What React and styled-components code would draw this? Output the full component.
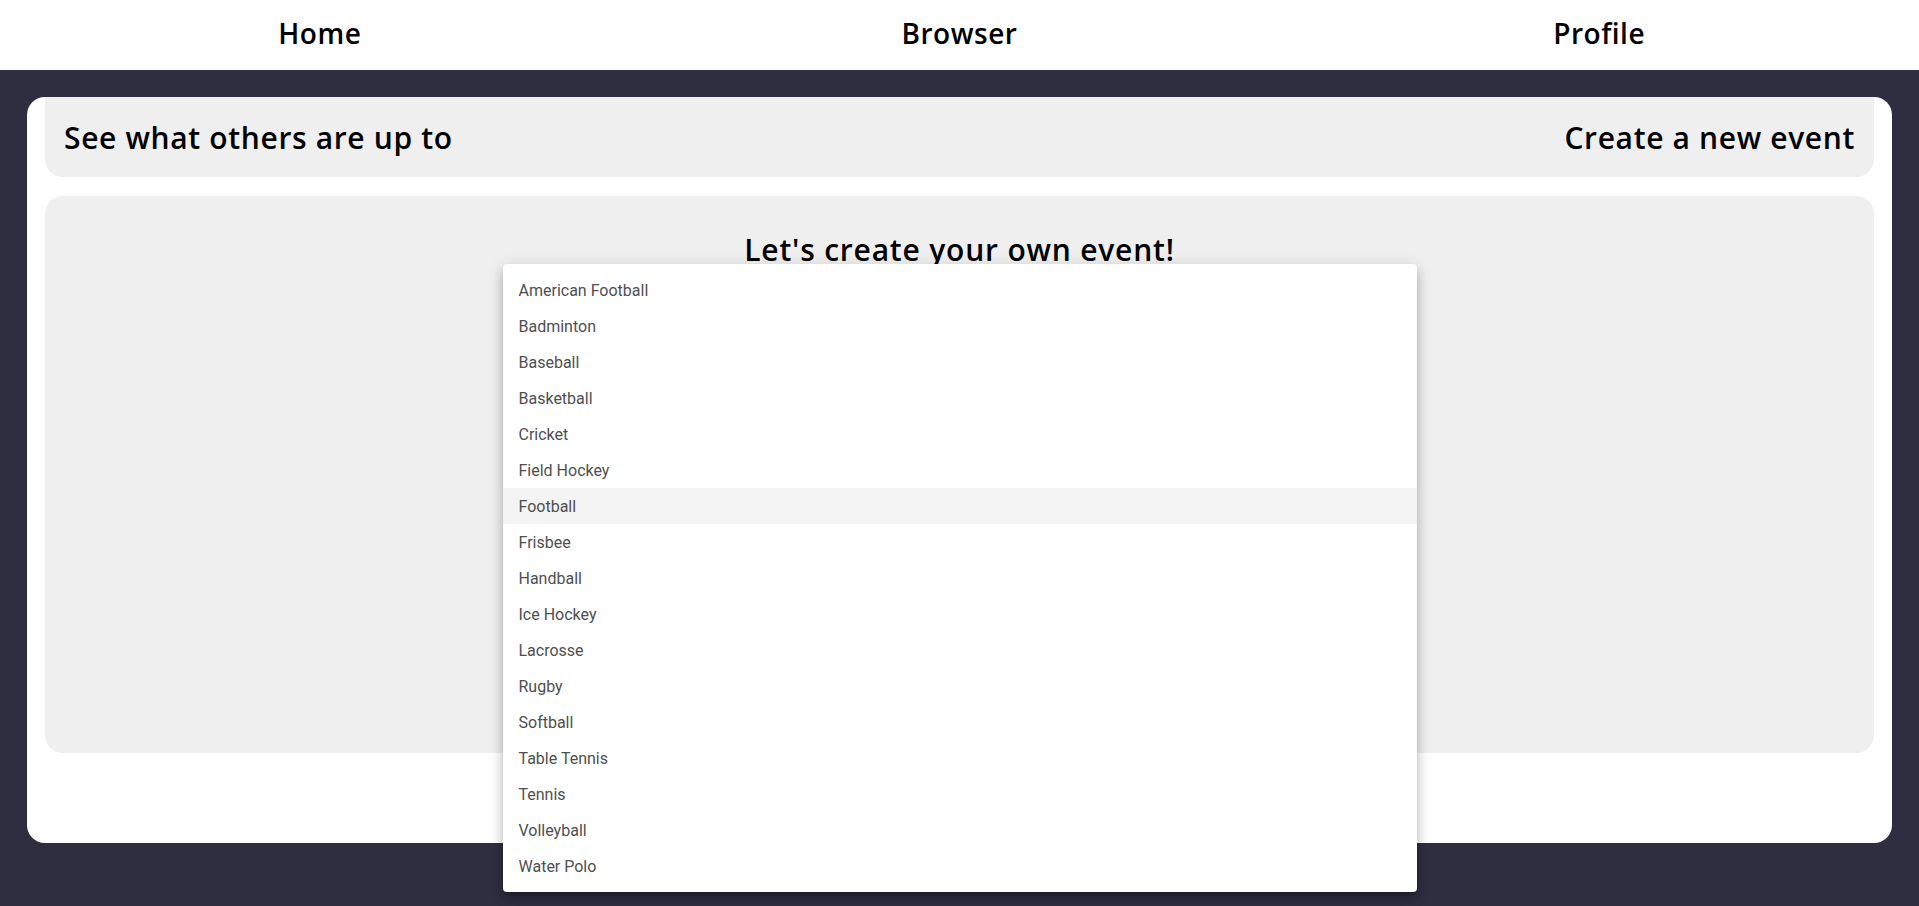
import React from 'react';
import styled, { createGlobalStyle } from 'styled-components';

const GlobalStyle = createGlobalStyle`
    html, body {
        margin: 0;
        padding: 0;
        background: #2f2e41;
        height: 100%;
        overflow: hidden;
    }
    * { box-sizing: border-box; }
`;

const sports = [
    'American Football', 'Badminton', 'Baseball', 'Basketball', 'Cricket',
    'Field Hockey', 'Football', 'Frisbee', 'Handball', 'Ice Hockey',
    'Lacrosse', 'Rugby', 'Softball', 'Table Tennis', 'Tennis',
    'Volleyball', 'Water Polo',
];

const headingFont = `"Open Sans", "Noto Sans", sans-serif`;

const NavBar = styled.nav`
    display: grid;
    grid-template-columns: repeat(3, 1fr);
    height: 70px;
    padding-bottom: 5px;
    background: #ffffff;
    align-items: center;
`;

const NavLink = styled.a`
    justify-self: center;
    font-family: ${headingFont};
    font-weight: 600;
    font-size: 28px;
    letter-spacing: 0.5px;
    color: #000;
    text-decoration: none;
    cursor: pointer;
`;

const Page = styled.main`
    padding: 27px;
`;

const Card = styled.section`
    background: #ffffff;
    border-radius: 18px;
    padding: 0 18px 90px;
    display: flex;
    flex-direction: column;
    gap: 19px;
`;

const TopBar = styled.div`
    display: flex;
    justify-content: space-between;
    align-items: center;
    height: 80px;
    padding: 0 19px;
    background: #efefef;
    border-radius: 0 0 18px 18px;
`;

const TopLink = styled.a`
    font-family: ${headingFont};
    font-weight: 600;
    font-size: 30px;
    letter-spacing: 0.65px;
    color: #000;
    cursor: pointer;
`;

const FormPanel = styled.div`
    background: #efefef;
    border-radius: 18px;
    height: 557px;
    padding-top: 36px;
`;

const Title = styled.h2`
    margin: 0;
    text-align: center;
    font-family: ${headingFont};
    font-weight: 600;
    font-size: 30px;
    line-height: 36px;
    letter-spacing: 0.8px;
    color: #000;
`;

const Field = styled.div`
    position: relative;
    width: 914px;
    margin: 0 auto;
`;

const Menu = styled.ul`
    position: absolute;
    top: -4px;
    left: 0;
    right: 0;
    margin: 0;
    padding: 8px 0;
    list-style: none;
    background: #ffffff;
    border-radius: 4px;
    box-shadow: 0 5px 5px -3px rgba(0,0,0,0.2), 0 8px 10px 1px rgba(0,0,0,0.14), 0 3px 14px 2px rgba(0,0,0,0.12);
    z-index: 10;
`;

const MenuItem = styled.li`
    height: 36px;
    display: flex;
    align-items: center;
    padding: 0 16px;
    font-family: "Roboto", sans-serif;
    font-size: 16px;
    color: #4f4f4f;
    background: ${p => (p.$active ? '#f4f4f4' : 'transparent')};
    cursor: pointer;
`;

export default function App() {
    return (
        <>
            <GlobalStyle />
            <NavBar>
                <NavLink>Home</NavLink>
                <NavLink>Browser</NavLink>
                <NavLink>Profile</NavLink>
            </NavBar>
            <Page>
                <Card>
                    <TopBar>
                        <TopLink>See what others are up to</TopLink>
                        <TopLink>Create a new event</TopLink>
                    </TopBar>
                    <FormPanel>
                        <Title>Let's create your own event!</Title>
                        <Field>
                            <Menu>
                                {sports.map(s => (
                                    <MenuItem key={s} $active={s === 'Football'}>{s}</MenuItem>
                                ))}
                            </Menu>
                        </Field>
                    </FormPanel>
                </Card>
            </Page>
        </>
    );
}
